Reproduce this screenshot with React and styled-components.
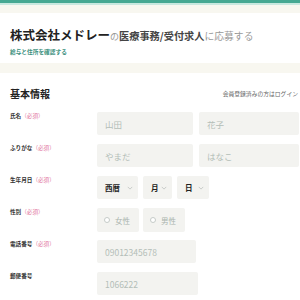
import React from 'react'
import styled, { createGlobalStyle } from 'styled-components'

const GlobalStyle = createGlobalStyle`
  html, body {
    margin: 0;
    padding: 0;
    background: #f8f7f0;
    font-family: "Noto Sans CJK JP", "Noto Sans", sans-serif;
    overflow: hidden;
  }
`

function App() {
  return (
    <Page>
      <GlobalStyle />
      <TopBar />
      <Header>
        <Title>
          <Company>株式会社メドレー</Company>
          <Small>の</Small>
          <Job>医療事務/受付求人</Job>
          <Apply>に応募する</Apply>
        </Title>
        <SubLink>給与と住所を確認する</SubLink>
      </Header>
      <Card>
        <CardHead>
          <Heading>基本情報</Heading>
          <LoginLink>会員登録済みの方はログイン</LoginLink>
        </CardHead>
        <Row>
          <Label>氏名<Req>（必須）</Req></Label>
          <Fields>
            <Input width={96}>山田</Input>
            <Input width={100}>花子</Input>
          </Fields>
        </Row>
        <Row>
          <Label>ふりがな<Req>（必須）</Req></Label>
          <Fields>
            <Input width={96}>やまだ</Input>
            <Input width={100}>はなこ</Input>
          </Fields>
        </Row>
        <Row>
          <Label>生年月日<Req>（必須）</Req></Label>
          <Fields gap={5}>
            <Select width={41}>西暦<Chevron /></Select>
            <Select width={29}>月<Chevron /></Select>
            <Select width={32}>日<Chevron /></Select>
          </Fields>
        </Row>
        <Row>
          <Label>性別<Req>（必須）</Req></Label>
          <Fields gap={4}>
            <Radio><Dot />女性</Radio>
            <Radio><Dot />男性</Radio>
          </Fields>
        </Row>
        <Row>
          <Label>電話番号<Req>（必須）</Req></Label>
          <Fields>
            <Input width={99}>09012345678</Input>
          </Fields>
        </Row>
        <Row>
          <Label>郵便番号</Label>
          <Fields>
            <Input width={101}>1066222</Input>
          </Fields>
        </Row>
      </Card>
    </Page>
  )
}

function Chevron() {
  return (
    <ChevronIcon viewBox="0 0 8 5">
      <path d="M1 1l3 3 3-3" fill="none" stroke="#b9bdbb" strokeWidth="1" />
    </ChevronIcon>
  )
}

export default App

const Page = styled.div`
  width: 300px;
  height: 300px;
  display: flex;
  flex-direction: column;
  overflow: hidden;
`

const TopBar = styled.div`
  height: 3px;
  background: #45a892;
  border-bottom: 2px solid #c8e8df;
  flex-shrink: 0;
`

const Header = styled.div`
  margin-top: 8px;
  height: 50px;
  background: #fff;
  padding: 0 10px;
  box-sizing: border-box;
  display: flex;
  flex-direction: column;
  justify-content: center;
  gap: 3px;
  flex-shrink: 0;
`

const Title = styled.div`
  display: flex;
  align-items: baseline;
  white-space: nowrap;
  padding-top: 4px;
`

const Company = styled.span`
  font-size: 12.5px;
  font-weight: 700;
  color: #222;
`

const Small = styled.span`
  font-size: 9px;
  color: #999;
`

const Job = styled.span`
  font-size: 10.2px;
  font-weight: 700;
  color: #444;
`

const Apply = styled.span`
  font-size: 9.8px;
  color: #999;
`

const SubLink = styled.div`
  font-size: 5.7px;
  font-weight: 700;
  color: #3b8f7d;
`

const Card = styled.div`
  margin-top: 10px;
  background: #fff;
  flex: 1;
  padding: 14px 0 0 10px;
  border-bottom: 3px solid #e6e6e3;
  box-sizing: border-box;
`

const CardHead = styled.div`
  display: flex;
  justify-content: space-between;
  align-items: center;
  height: 12px;
  margin-bottom: 13px;
`

const Heading = styled.div`
  font-size: 10px;
  font-weight: 700;
  color: #222;
`

const LoginLink = styled.div`
  font-size: 5.8px;
  color: #666;
  white-space: nowrap;
  padding-right: 2px;
`

const Row = styled.div`
  display: flex;
  height: 23px;
  margin-bottom: 9px;
`

const Label = styled.div`
  width: 87px;
  flex-shrink: 0;
  font-size: 5.6px;
  font-weight: 700;
  line-height: 7px;
  padding-top: 1px;
  color: #333;
  white-space: nowrap;
`

const Req = styled.span`
  color: #e2749c;
  font-weight: 400;
`

const Fields = styled.div`
  display: flex;
  gap: ${p => p.gap || 6}px;
`

const Input = styled.div`
  width: ${p => p.width}px;
  height: 23px;
  background: #f3f3f0;
  border-radius: 2px;
  padding-left: 8px;
  box-sizing: border-box;
  display: flex;
  align-items: center;
  font-size: 8.5px;
  color: #b3beb8;
  flex-shrink: 0;
`

const Select = styled.div`
  width: ${p => p.width}px;
  height: 23px;
  background: #f3f3f0;
  border-radius: 2px;
  padding: 0 5px 0 8px;
  box-sizing: border-box;
  display: flex;
  align-items: center;
  justify-content: space-between;
  font-size: 7.5px;
  font-weight: 700;
  color: #222;
`

const ChevronIcon = styled.svg`
  width: 6px;
  height: 4px;
`

const Radio = styled.div`
  width: 42px;
  height: 24px;
  background: #f3f3f0;
  border-radius: 2px;
  padding-left: 7px;
  box-sizing: border-box;
  display: flex;
  align-items: center;
  gap: 5px;
  font-size: 7.5px;
  color: #aab3ae;
`

const Dot = styled.span`
  width: 4px;
  height: 4px;
  border-radius: 50%;
  border: 1px solid #c5cbc8;
  background: #fff;
`
